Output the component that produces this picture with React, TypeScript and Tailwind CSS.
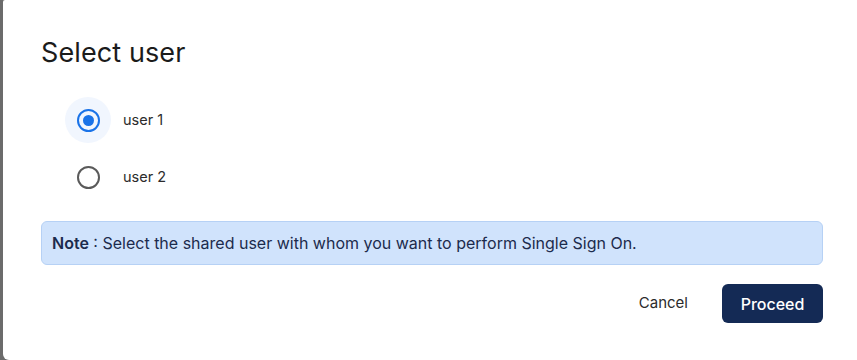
import React from "react";

export default function App() {
  return (
    <div className="w-[857px] h-[360px] bg-[#6b6b6b] flex overflow-hidden" style={{ fontFamily: "Inter, 'Noto Sans', sans-serif" }}>
      <div className="ml-[3px] flex-1 bg-white rounded-tl-[2px] rounded-bl-[6px] pl-[38px] pr-[34px] pt-[36px]">
        <h1 className="text-[27px] leading-[34px] text-[#1b1b1b] font-normal tracking-[0.1px]">Select user</h1>
        <div className="mt-[27px] pl-[24px] flex flex-col">
          <label className="flex items-center h-[46px]">
            <span className="w-[46px] h-[46px] rounded-full bg-[#f1f6fe] flex items-center justify-center">
              <span className="w-[23px] h-[23px] rounded-full border-[2.5px] border-[#1a73e8] flex items-center justify-center">
                <span className="w-[11px] h-[11px] rounded-full bg-[#1a73e8]" />
              </span>
            </span>
            <span className="ml-[12px] text-[14.5px] text-[#2b2b2b]">user 1</span>
          </label>
          <label className="flex items-center h-[46px] mt-[11px]">
            <span className="w-[46px] h-[46px] rounded-full flex items-center justify-center">
              <span className="w-[23px] h-[23px] rounded-full border-[2px] border-[#5a5a5a]" />
            </span>
            <span className="ml-[12px] text-[14.5px] text-[#2b2b2b]">user 2</span>
          </label>
        </div>
        <div className="mt-[21px] h-[44px] bg-[#d0e3fc] border border-[#b6d1f5] rounded-[6px] flex items-center px-[10px] text-[16px] text-[#1c2b4d]">
          <span className="font-semibold">Note</span>
          <span>&nbsp;: Select the shared user with whom you want to perform Single Sign On.</span>
        </div>
        <div className="mt-[19px] flex justify-end items-center">
          <button className="text-[15px] text-[#2b2b2b] mr-[34px]">Cancel</button>
          <button className="w-[101px] h-[39px] rounded-[6px] bg-[#142a55] text-white text-[16px] font-medium">Proceed</button>
        </div>
      </div>
    </div>
  );
}
